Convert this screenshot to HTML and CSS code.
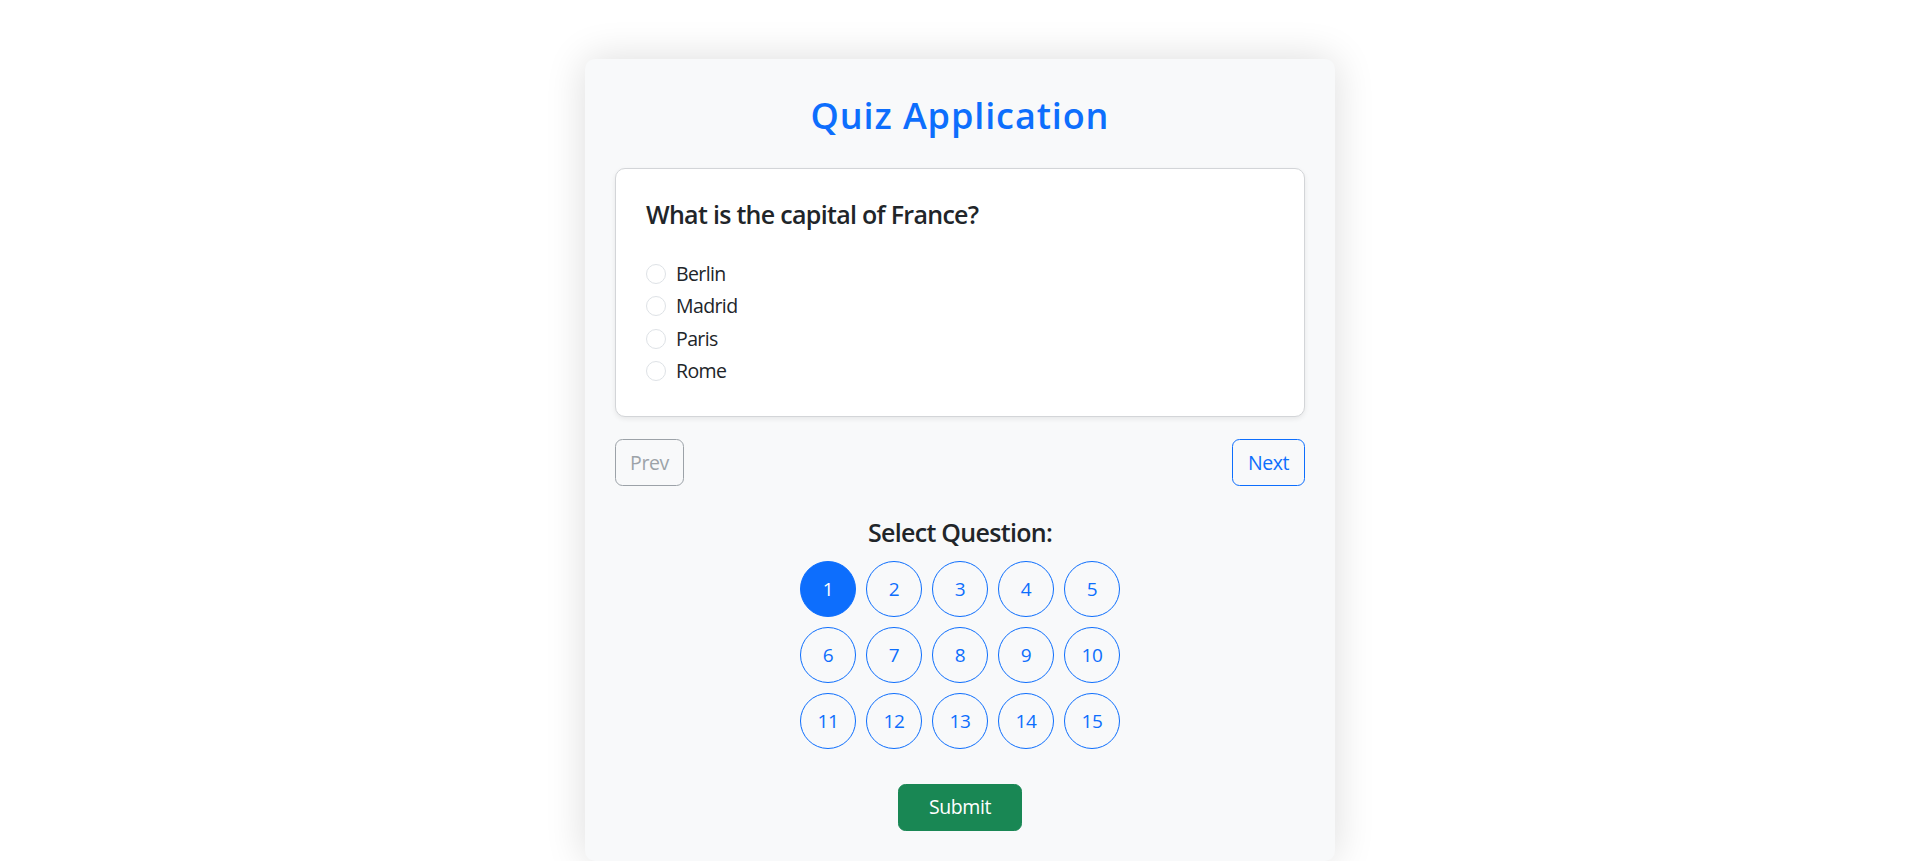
FILE: index.html
```html
<!DOCTYPE html>
<html lang="en">
<head>
<meta charset="utf-8">
<title>Quiz Application</title>
<link rel="stylesheet" href="styles.css">
</head>
<body>
<main class="page">
  <section class="quiz">
    <h3 class="title">Quiz Application</h3>
    <div class="question-box">
      <h5 class="question">What is the capital of France?</h5>
      <label class="option"><input type="radio" name="q1" class="radio"><span>Berlin</span></label>
      <label class="option"><input type="radio" name="q1" class="radio"><span>Madrid</span></label>
      <label class="option"><input type="radio" name="q1" class="radio"><span>Paris</span></label>
      <label class="option"><input type="radio" name="q1" class="radio"><span>Rome</span></label>
    </div>
    <div class="nav">
      <button class="btn btn-prev" disabled>Prev</button>
      <button class="btn btn-next">Next</button>
    </div>
    <div class="select">
      <h5 class="select-title">Select Question:</h5>
      <div class="grid">
        <button class="qbtn active">1</button>
        <button class="qbtn">2</button>
        <button class="qbtn">3</button>
        <button class="qbtn">4</button>
        <button class="qbtn">5</button>
        <button class="qbtn">6</button>
        <button class="qbtn">7</button>
        <button class="qbtn">8</button>
        <button class="qbtn">9</button>
        <button class="qbtn">10</button>
        <button class="qbtn">11</button>
        <button class="qbtn">12</button>
        <button class="qbtn">13</button>
        <button class="qbtn">14</button>
        <button class="qbtn">15</button>
      </div>
    </div>
    <div class="submit-wrap">
      <button class="btn btn-submit">Submit</button>
    </div>
  </section>
</main>
</body>
</html>
```

FILE: styles.css
```css
html, body {
  margin: 0;
  padding: 0;
  background: #ffffff;
}

body {
  font-family: "Open Sans", "Noto Sans", sans-serif;
  color: #212529;
  overflow: hidden;
}

.page {
  display: flex;
  justify-content: center;
  padding: 59px 0 40px 13px;
}

.quiz {
  width: 750px;
  box-sizing: border-box;
  padding: 30px;
  background: #f8f9fa;
  border-radius: 10px;
  box-shadow: 0 0 40px rgba(0, 0, 0, 0.14);
}

.title {
  margin: 0 0 31px;
  padding-top: 5.5px;
  font-size: 36px;
  font-weight: 600;
  line-height: 42px;
  letter-spacing: 0.9px;
  color: #0d6efd;
  text-align: center;
}

.question-box {
  background: #ffffff;
  border: 1px solid #d3d5d8;
  border-radius: 10px;
  padding: 30px;
  box-shadow: 0 2px 5px rgba(0, 0, 0, 0.075);
}

.question {
  margin: 0 0 30px;
  font-size: 25px;
  font-weight: 600;
  line-height: 30px;
  letter-spacing: -0.7px;
  color: #212529;
}

.option {
  display: flex;
  align-items: center;
  gap: 10px;
  height: 30px;
  margin-bottom: 2.5px;
  font-size: 19.5px;
  line-height: 30px;
  letter-spacing: -0.6px;
  color: #212529;
}

.option:last-child {
  margin-bottom: 0;
}

.radio {
  appearance: none;
  -webkit-appearance: none;
  margin: 0;
  width: 20px;
  height: 20px;
  box-sizing: border-box;
  border: 1px solid #dee2e6;
  border-radius: 50%;
  background: #ffffff;
  flex: none;
}

.nav {
  display: flex;
  justify-content: space-between;
  margin-top: 22px;
}

.btn {
  font-family: inherit;
  font-size: 19.5px;
  line-height: 30px;
  letter-spacing: -0.4px;
  padding: 7.5px 15px;
  border: 1px solid transparent;
  border-radius: 7.5px;
  background: transparent;
  box-sizing: border-box;
  height: 47px;
}

.btn-prev {
  width: 69px;
  padding: 7.5px 0;
  color: #6c757d;
  border-color: #6c757d;
  opacity: 0.65;
}

.btn-next {
  width: 73px;
  padding: 7.5px 0;
  color: #0d6efd;
  border-color: #0d6efd;
}

.select {
  margin-top: 30.5px;
  text-align: center;
}

.select-title {
  margin: 0 0 14.5px;
  font-size: 25px;
  font-weight: 600;
  line-height: 30px;
  letter-spacing: -0.7px;
  color: #212529;
}

.grid {
  display: grid;
  grid-template-columns: repeat(5, 56px);
  gap: 10px;
  justify-content: center;
}

.qbtn {
  width: 56px;
  height: 56px;
  padding: 0;
  border: 1px solid #0d6efd;
  border-radius: 50%;
  background: transparent;
  color: #0d6efd;
  font-family: inherit;
  font-size: 19px;
  line-height: 1;
  letter-spacing: -0.3px;
}

.qbtn.active {
  background: #0d6efd;
  color: #ffffff;
}

.submit-wrap {
  margin-top: 34.5px;
  text-align: center;
}

.btn-submit {
  width: 124px;
  padding: 7.5px 0;
  background: #198754;
  border-color: #198754;
  color: #ffffff;
}
```
